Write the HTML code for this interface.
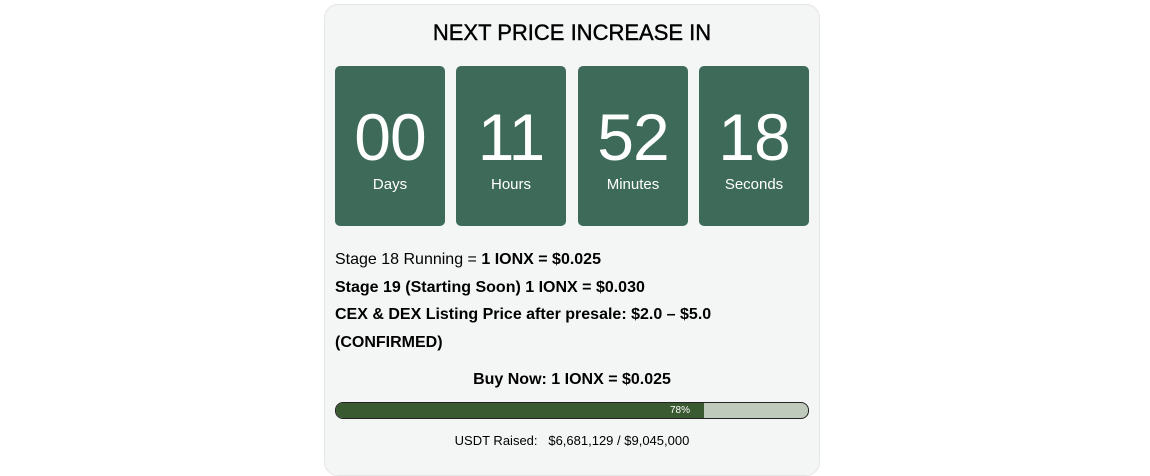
<!DOCTYPE html>
<html><head><style>
body{margin:0;width:1150px;height:457px;background:#fff;font-family:"Liberation Sans",sans-serif;overflow:hidden;position:relative}
.card{position:absolute;left:324px;top:4px;width:494px;height:470px;background:#f4f6f5;border:1px solid #e3e5e4;border-radius:14px}
h1{position:absolute;left:0;width:100%;top:15px;margin:0;text-align:center;font-size:22px;font-weight:normal;color:#000;-webkit-text-stroke:.4px #000}
.box{position:absolute;top:61px;width:110px;height:160px;background:#3e6b59;border-radius:5px;color:#fff;text-align:center}
.n{position:absolute;top:33px;width:100%;font-size:66px;font-weight:300;line-height:76px;letter-spacing:-1px}
.l{position:absolute;top:110px;width:100%;font-size:15px}
.t{position:absolute;left:10px;font-size:16px;color:#000}
b{font-weight:bold}
.bar{position:absolute;left:10px;top:397px;width:472px;height:15px;border:1px solid #222;border-radius:8px;background:#bfc9bc;overflow:hidden}
.fill{width:368px;height:100%;background:#3a5a32;color:#fff;font-size:10px;text-align:right;line-height:15px;box-sizing:border-box;padding-right:14px}
</style></head><body>
<div class="card">
<h1>NEXT PRICE INCREASE IN</h1>
<div class="box" style="left:10px"><div class="n">00</div><div class="l">Days</div></div>
<div class="box" style="left:131px"><div class="n">11</div><div class="l">Hours</div></div>
<div class="box" style="left:253px"><div class="n">52</div><div class="l">Minutes</div></div>
<div class="box" style="left:374px"><div class="n">18</div><div class="l">Seconds</div></div>
<div class="t" style="top:246px">Stage 18 Running = <b>1 IONX = $0.025</b></div>
<div class="t" style="top:274px"><b>Stage 19 (Starting Soon) 1 IONX = $0.030</b></div>
<div class="t" style="top:301px"><b>CEX &amp; DEX Listing Price after presale: $2.0 – $5.0</b></div>
<div class="t" style="top:329px"><b>(CONFIRMED)</b></div>
<div class="t" style="top:366px;left:0;width:100%;text-align:center"><b>Buy Now: 1 IONX = $0.025</b></div>
<div class="bar"><div class="fill">78%</div></div>
<div class="t" style="top:428px;left:0;width:100%;text-align:center;font-size:13px">USDT Raised: &nbsp; $6,681,129 / $9,045,000</div>
</div>
</body></html>
